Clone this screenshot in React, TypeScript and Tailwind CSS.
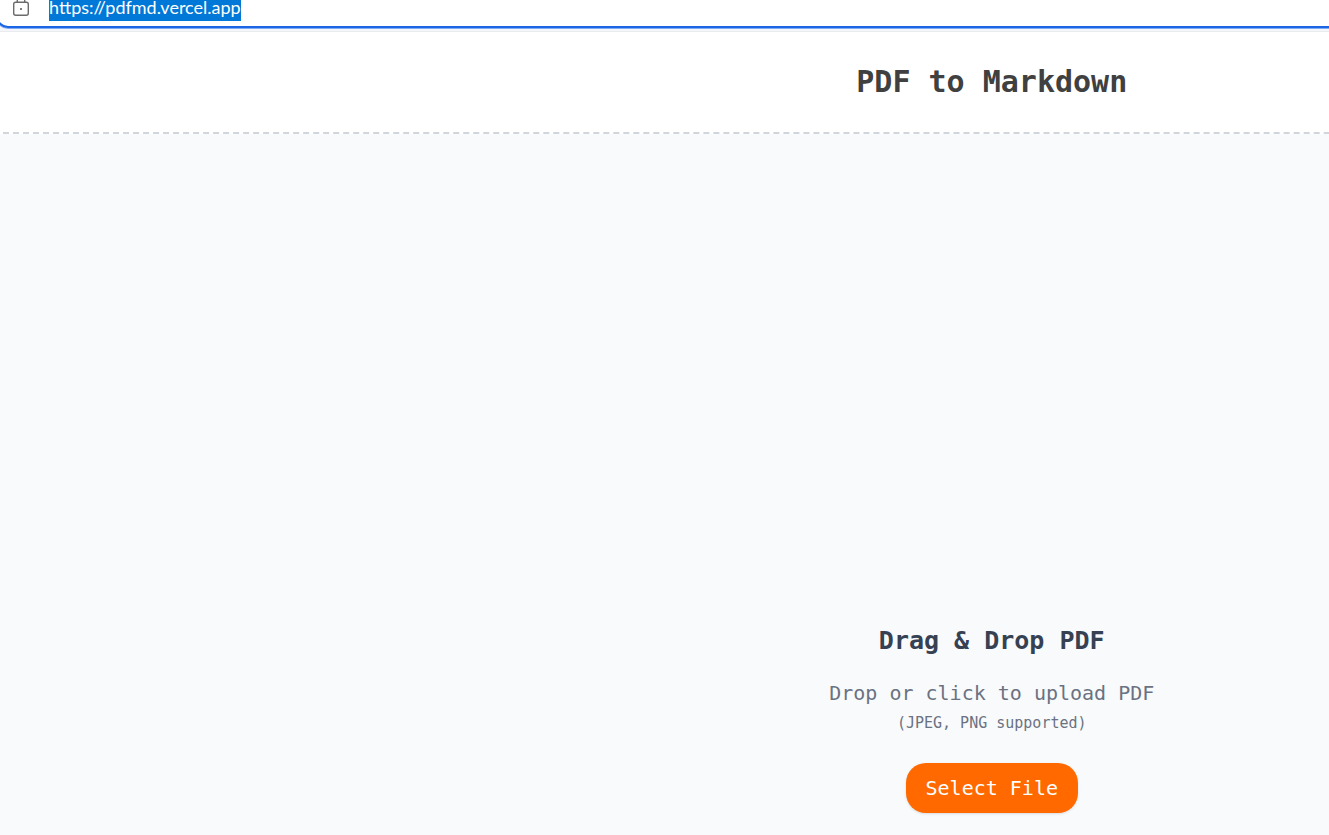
import React from 'react';

const LockIcon: React.FC = () => (
  <svg className="h-5 w-5 shrink-0" viewBox="0 0 20 20" fill="none" stroke="#6b6b6b" strokeWidth="1.4" aria-hidden="true">
    <rect x="2.7" y="5.2" width="14.6" height="13" rx="2" />
    <path d="M6.3 5V3.5a3.7 3.7 0 0 1 7.4 0V5" />
    <circle cx="10" cy="12" r="1.1" fill="#5f5f5f" stroke="none" />
  </svg>
);

const AddressBar: React.FC = () => (
  <div className="overflow-hidden border-b border-[#e9ebee] bg-[#f5f6f9] pb-[3px]">
    <div className="-ml-1 flex h-7 items-start overflow-hidden rounded-bl-xl border-b-2 border-l-2 border-[#1a66e5] bg-white pl-[13px] shadow-[0_1px_0_#82aaf5]">
      <div className="-mt-[3px] flex h-6 items-end gap-[18px]">
        <div className="pb-1">
          <LockIcon />
        </div>
        <input
          type="text"
          aria-label="Address"
          defaultValue="https://pdfmd.vercel.app"
          className="h-6 w-48 bg-[#0078d7] pb-[5px] font-['Lato','Noto_Sans',sans-serif] text-[18px] leading-5 text-white outline-none"
        />
      </div>
    </div>
  </div>
);

const Header: React.FC = () => (
  <header className="border-b-2 border-dashed border-[#d1d5dc] bg-white px-4 pt-8 pb-8">
    <h1 className="text-center text-[30px] leading-9 font-bold text-[#404040]">PDF to Markdown</h1>
  </header>
);

const DropZone: React.FC = () => (
  <main className="flex flex-col items-center pt-[489px] pb-5 text-center">
    <h2 className="text-[25px] leading-9 font-bold text-[#364153]">Drag &amp; Drop PDF</h2>
    <p className="mt-[18px] text-xl leading-8 text-[#6a7282]">Drop or click to upload PDF</p>
    <p className="mt-1 text-[15px] leading-5 text-[#6a7282]">(JPEG, PNG supported)</p>
    <button
      type="button"
      className="mt-[30px] h-[50px] rounded-[20px] bg-[#ff6900] px-5 text-xl text-white shadow-sm"
    >
      Select File
    </button>
  </main>
);

export default function App() {
  return (
    <div className="min-h-screen overflow-hidden bg-[#f9fafb]">
      <AddressBar />
      {/* the page is wider than the window and runs off its right edge */}
      <div className="-ml-[7px] w-[150.3%] bg-[#f9fafb] font-['DejaVu_Sans_Mono',monospace]">
        <Header />
        <DropZone />
      </div>
    </div>
  );
}
